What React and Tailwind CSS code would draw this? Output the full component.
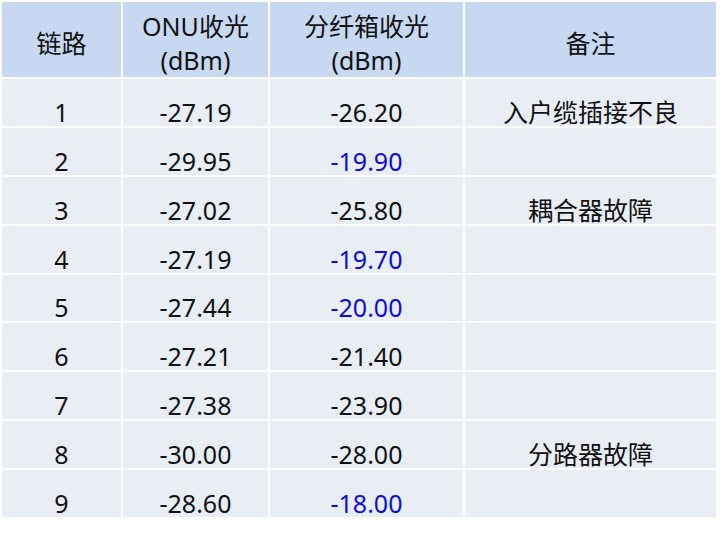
import React from "react";

const rows = [
  { id: 1, onu: "-27.19", box: "-26.20", note: "入户缆插接不良" },
  { id: 2, onu: "-29.95", box: "-19.90", blue: true },
  { id: 3, onu: "-27.02", box: "-25.80", note: "耦合器故障" },
  { id: 4, onu: "-27.19", box: "-19.70", blue: true },
  { id: 5, onu: "-27.44", box: "-20.00", blue: true },
  { id: 6, onu: "-27.21", box: "-21.40" },
  { id: 7, onu: "-27.38", box: "-23.90" },
  { id: 8, onu: "-30.00", box: "-28.00", note: "分路器故障" },
  { id: 9, onu: "-28.60", box: "-18.00", blue: true },
];

const head = "bg-[#c6d9f1] flex justify-center text-center";
const cell = "bg-[#e9edf4] flex items-end justify-center pb-[2px] leading-[24px]";

export default function App() {
  return (
    <div
      className="w-[720px] h-[533px] bg-white pt-[2px] pl-[2px] text-[#111] text-[25px]"
      style={{ fontFamily: '"Noto Sans", "Noto Sans CJK SC", sans-serif' }}
    >
      <div className="grid grid-cols-[119px_145px_193px_251px] grid-rows-[75px_repeat(9,minmax(0,1fr))] gap-[2px] h-[515px]">
        <div className={`${head} items-center pt-[6px] leading-[34px]`}>链路</div>
        <div className={`${head} items-end leading-[34px]`}>
          ONU收光
          <br />
          (dBm)
        </div>
        <div className={`${head} items-end leading-[34px]`}>
          分纤箱收光
          <br />
          (dBm)
        </div>
        <div className={`${head} items-center pt-[6px] leading-[34px]`}>备注</div>

        {rows.map((r) => (
          <React.Fragment key={r.id}>
            <div className={cell}>{r.id}</div>
            <div className={cell}>{r.onu}</div>
            <div className={`${cell} ${r.blue ? "text-[#0d0dd9]" : ""}`}>{r.box}</div>
            <div className={cell}>{r.note || ""}</div>
          </React.Fragment>
        ))}
      </div>
    </div>
  );
}
